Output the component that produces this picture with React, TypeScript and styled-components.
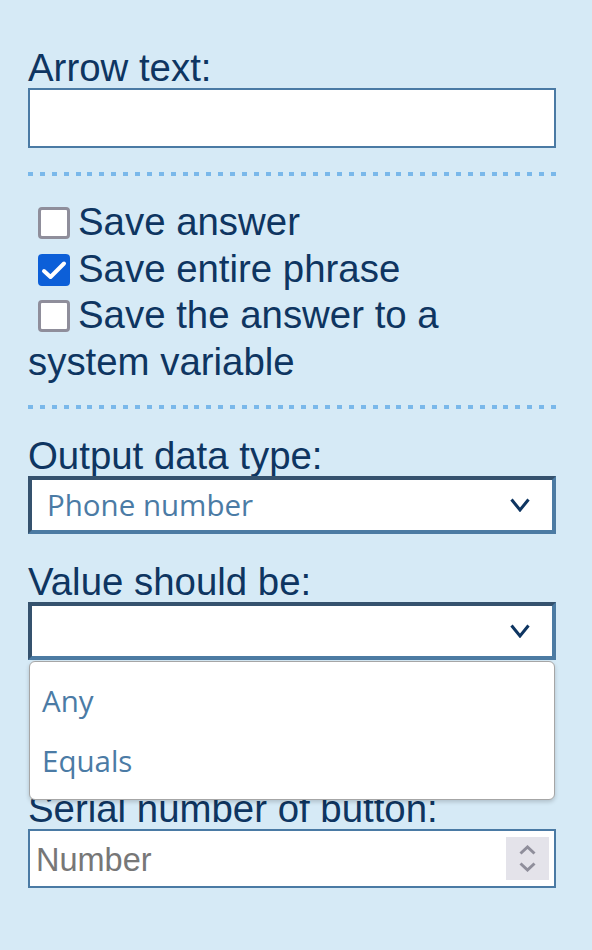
import React from "react";
import styled, { createGlobalStyle } from "styled-components";

const GlobalStyle = createGlobalStyle`
  html, body {
    margin: 0;
    padding: 0;
    background: #d6eaf6;
  }
  body {
    font-family: "Liberation Sans", Arial, sans-serif;
  }
`;

const Panel = styled.div`
  box-sizing: border-box;
  width: 592px;
  min-height: 950px;
  padding: 48px 36px 0 28px;
  display: flex;
  flex-direction: column;
  color: #0e3561;
  background: #d6eaf6;
`;

const Label = styled.div<{ $gap?: number }>`
  font-size: 38.4px;
  line-height: 40px;
  height: 40px;
  white-space: nowrap;
  margin-top: ${(p) => p.$gap ?? 0}px;
`;

const TextInput = styled.input`
  box-sizing: border-box;
  display: block;
  width: 100%;
  height: 60px;
  margin: 0;
  border: 2px solid #4a7aa4;
  background: #fff;
  outline: none;
  font-family: "Liberation Sans", Arial, sans-serif;
  font-size: 32px;
  padding: 0 6px;
`;

const Divider = styled.div<{ $top: number; $bottom: number }>`
  height: 4px;
  margin-top: ${(p) => p.$top}px;
  margin-bottom: ${(p) => p.$bottom}px;
  background: repeating-linear-gradient(
    to right,
    #7ab8ea 0 5px,
    transparent 5px 11.886px
  );
`;

const CheckList = styled.div`
  font-size: 38.4px;
  line-height: 46.5px;
`;

const CheckRow = styled.label`
  display: block;
`;

const Box = styled.span<{ $checked?: boolean }>`
  box-sizing: border-box;
  display: inline-block;
  width: 32px;
  height: 32px;
  margin: 0 8px 0 10px;
  vertical-align: -4px;
  border-radius: 4px;
  border: 3px solid ${(p) => (p.$checked ? "#0c5fd8" : "#8f8e9b")};
  background: ${(p) => (p.$checked ? "#0c5fd8" : "#fff")};
  position: relative;

  svg {
    position: absolute;
    left: -3px;
    top: -3px;
  }
`;

const SelectWrap = styled.div`
  position: relative;
`;

const Select = styled.div`
  box-sizing: border-box;
  height: 58px;
  display: flex;
  align-items: center;
  justify-content: space-between;
  background: #fff;
  border-style: solid;
  border-width: 4px;
  border-color: #35526e #4c7ba3 #4c7ba3 #35526e;
  padding: 0 21px 0 15px;
`;

const SelectValue = styled.span`
  font-family: "Open Sans", "Noto Sans", sans-serif;
  font-size: 29.5px;
  line-height: 50px;
  color: #4b7ba5;
`;

const Menu = styled.div`
  box-sizing: border-box;
  position: absolute;
  z-index: 2;
  top: calc(100% + 1px);
  left: 1px;
  right: 1px;
  height: 139px;
  padding: 9px 0 0;
  background: #fff;
  border: 1px solid #a6a6a6;
  border-radius: 6px;
  box-shadow: 0 2px 4px rgba(0, 0, 0, 0.18);
`;

const MenuItem = styled.div`
  height: 60px;
  line-height: 60px;
  padding-left: 12px;
  font-family: "Open Sans", "Noto Sans", sans-serif;
  font-size: 29.5px;
  color: #4b7ba5;
`;

const NumberBox = styled.div`
  box-sizing: border-box;
  height: 59px;
  display: flex;
  align-items: center;
  background: #fff;
  border: 2px solid #4a7aa4;
  padding: 0 5px 0 6px;
`;

const NumberField = styled.input`
  flex: 1;
  min-width: 0;
  border: none;
  outline: none;
  padding: 4px 0 0;
  margin: 0;
  background: transparent;
  font-family: "Liberation Sans", Arial, sans-serif;
  font-size: 32.5px;
  color: #333;

  &::placeholder {
    color: #777;
    opacity: 1;
  }
`;

const Spinner = styled.span`
  width: 43px;
  height: 43px;
  background: #e4e3ea;
  display: flex;
  flex-direction: column;
  align-items: center;
  justify-content: center;
  gap: 7px;
`;

const Chevron = ({ up, color, w, h, sw }: { up?: boolean; color: string; w: number; h: number; sw: number }) => (
  <svg width={w} height={h} viewBox={`0 0 ${w} ${h}`} fill="none">
    <polyline
      points={
        up
          ? `${sw / 2 + 1},${h - sw / 2} ${w / 2},${sw / 2 + 0.5} ${w - sw / 2 - 1},${h - sw / 2}`
          : `${sw / 2 + 1},${sw / 2} ${w / 2},${h - sw / 2 - 0.5} ${w - sw / 2 - 1},${sw / 2}`
      }
      stroke={color}
      strokeWidth={sw}
      strokeLinecap="butt"
      strokeLinejoin="miter"
    />
  </svg>
);

const Check = () => (
  <svg width="32" height="32" viewBox="0 0 32 32" fill="none">
    <polyline
      points="6,17 12.5,23 26,9.5"
      stroke="#fff"
      strokeWidth="4"
      strokeLinecap="round"
      strokeLinejoin="round"
    />
  </svg>
);

export default function App() {
  return (
    <>
      <GlobalStyle />
      <Panel>
        <Label>Arrow text:</Label>
        <TextInput type="text" />

        <Divider $top={24} $bottom={23} />

        <CheckList>
          <CheckRow>
            <Box />
            Save answer
          </CheckRow>
          <CheckRow>
            <Box $checked>
              <Check />
            </Box>
            Save entire phrase
          </CheckRow>
          <CheckRow>
            <Box />
            Save the answer to a system variable
          </CheckRow>
        </CheckList>

        <Divider $top={20} $bottom={0} />

        <Label $gap={27}>Output data type:</Label>
        <SelectWrap>
          <Select>
            <SelectValue>Phone number</SelectValue>
            <Chevron color="#0e3561" w={22} h={14} sw={3} />
          </Select>
        </SelectWrap>

        <Label $gap={28}>Value should be:</Label>
        <SelectWrap>
          <Select>
            <SelectValue />
            <Chevron color="#0e3561" w={22} h={14} sw={3} />
          </Select>
          <Menu>
            <MenuItem>Any</MenuItem>
            <MenuItem>Equals</MenuItem>
          </Menu>
        </SelectWrap>

        <Label $gap={129}>Serial number of button:</Label>
        <NumberBox>
          <NumberField placeholder="Number" />
          <Spinner>
            <Chevron up color="#8f8e9b" w={19} h={10} sw={3} />
            <Chevron color="#8f8e9b" w={19} h={10} sw={3} />
          </Spinner>
        </NumberBox>
      </Panel>
    </>
  );
}
